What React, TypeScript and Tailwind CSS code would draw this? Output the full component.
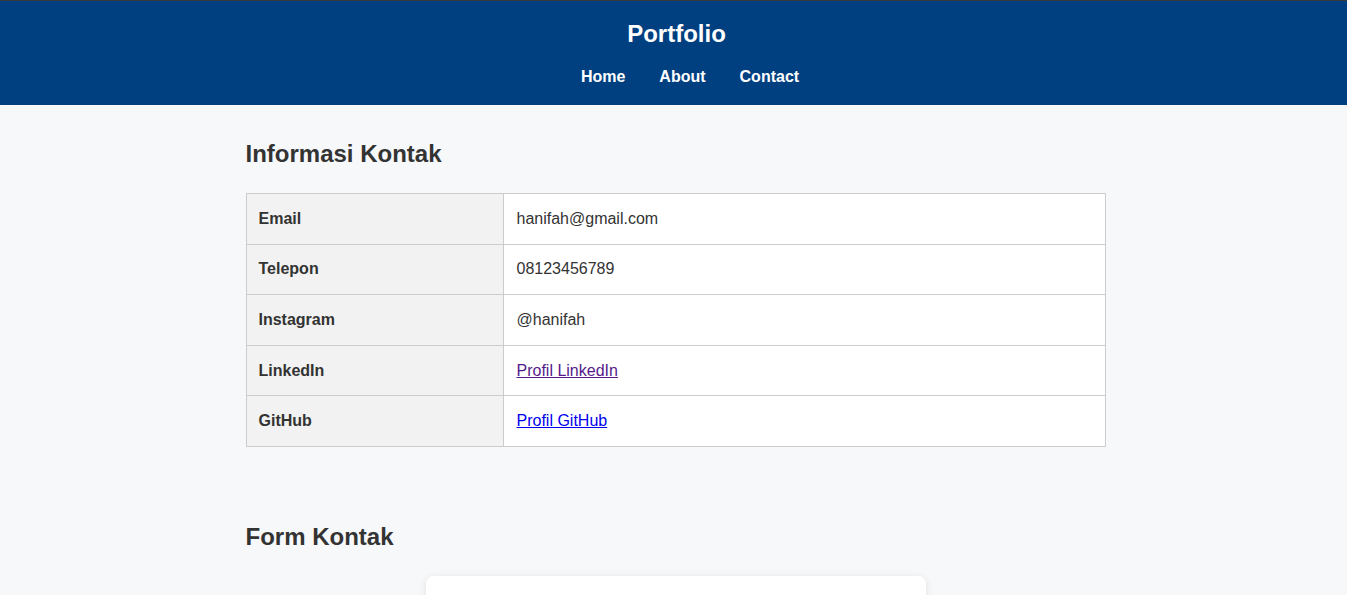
const contacts = [
  { label: 'Email', value: 'hanifah@gmail.com' },
  { label: 'Telepon', value: '08123456789' },
  { label: 'Instagram', value: '@hanifah' },
  { label: 'LinkedIn', value: 'Profil LinkedIn', link: 'visited' },
  { label: 'GitHub', value: 'Profil GitHub', link: 'new' },
];

export default function App() {
  return (
    <div className="min-h-screen bg-[#f7f8fa] font-['Liberation_Sans',Arial,sans-serif] text-[#333]">
      {/* Header */}
      <header className="h-[105px] border-t border-[#3a3a3a] bg-[#004080] text-white">
        <h1 className="pl-[6px] pt-[19px] text-center text-[24px] font-bold leading-[28px]">Portfolio</h1>
        <nav className="mt-[20px] flex justify-center gap-[34px] pl-[33px] text-[16px] font-bold leading-[18px]">
          <a href="#">Home</a>
          <a href="#">About</a>
          <a href="#">Contact</a>
        </nav>
      </header>

      <main className="mx-auto w-[864px] pl-[4px]">
        <section>
          <h2 className="pt-[35px] text-[24px] font-bold leading-[28px]">Informasi Kontak</h2>
          <table className="mt-[25px] w-full border-collapse text-[16px]">
            <tbody>
              {contacts.map((c) => (
                <tr key={c.label} className="h-[50.6px]">
                  <th className="w-[257px] border border-[#ccc] bg-[#f2f2f2] px-[12px] text-left font-bold">
                    {c.label}
                  </th>
                  <td className="border border-[#ccc] bg-white px-[13px]">
                    {c.link ? (
                      <a
                        href="#"
                        className={`underline ${c.link === 'visited' ? 'text-[#551a8b]' : 'text-[#0000ee]'}`}
                      >
                        {c.value}
                      </a>
                    ) : (
                      c.value
                    )}
                  </td>
                </tr>
              ))}
            </tbody>
          </table>
        </section>

        <section>
          <h2 className="pt-[76px] text-[24px] font-bold leading-[28px]">Form Kontak</h2>
          <div className="mx-auto mt-[25px] h-[200px] w-[500px] rounded-[8px] bg-white shadow-[0_2px_8px_rgba(0,0,0,0.1)]" />
        </section>
      </main>
    </div>
  );
}
